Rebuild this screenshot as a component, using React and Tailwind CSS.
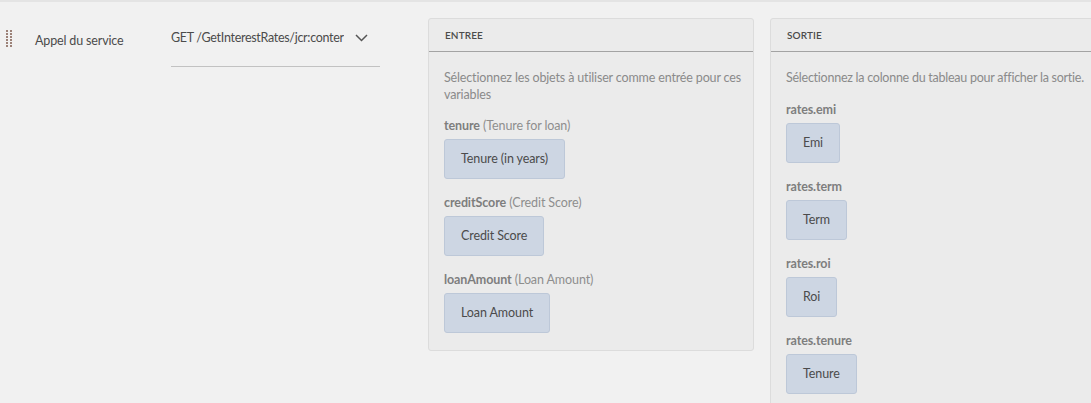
import React from "react";

const font = { fontFamily: "Lato, 'Open Sans', sans-serif" };

function Handle() {
  const rows = [0, 1, 2, 3, 4, 5];
  return (
    <div className="flex gap-[2px] mt-[12px]">
      {[0, 1].map((c) => (
        <div key={c} className="flex flex-col gap-[1px]">
          {rows.map((r) => (
            <div key={r} className="w-[2px] h-[2px] bg-[#9c8278]" />
          ))}
        </div>
      ))}
    </div>
  );
}

function Btn({ children }) {
  return (
    <div className="inline-flex items-center h-[40px] px-[16px] rounded-[3px] bg-[#cdd6e3] border border-[#bdc8d8] text-[12.5px] tracking-[-0.1px] text-[#4b4b4b]">
      {children}
    </div>
  );
}

function Panel({ title, desc, descClass, children, width }) {
  return (
    <div className={`shrink-0 ${width} rounded-[3px] border border-[#dcdcdc] bg-[#ebebeb]`}>
      <div className="h-[33px] flex items-center px-[16px] border-b border-[#a3a3a3] text-[10px] font-semibold text-[#4b4b4b] tracking-[0.1px]">
        {title}
      </div>
      <div className="px-[15px] pt-[17px] pb-[17px]">
        <div className={`text-[12.5px] leading-[17px] tracking-[-0.15px] text-[#8a8a8a] ${descClass}`}>{desc}</div>
        {children}
      </div>
    </div>
  );
}

function Field({ name, label, btn }) {
  return (
    <div className="mt-[15px]">
      <div className="text-[12.5px] leading-[17px] tracking-[-0.1px] text-[#8e8e8e]">
        <span className="font-bold text-[#7e7e7e]">{name}</span>
        {label ? <span> ({label})</span> : null}
      </div>
      <div className="mt-[5px]">
        <Btn>{btn}</Btn>
      </div>
    </div>
  );
}

export default function App() {
  return (
    <div className="w-[1091px] h-[403px] overflow-hidden bg-[#f1f1f1] border-t-2 border-[#e4e4e4]" style={font}>
      <div className="flex items-start pt-[16px]">
        <div className="shrink-0 pl-[6px]">
          <Handle />
        </div>
        <div className="shrink-0 ml-[23px] mt-[14px] w-[136px] text-[12.5px] tracking-[-0.15px] text-[#4b4b4b]">Appel du service</div>
        <div className="shrink-0 mt-[11px] w-[209px] border-b border-[#c2c2c2] h-[38px] flex items-start justify-between pr-[12px]">
          <span className="text-[12.5px] tracking-[-0.3px] text-[#4b4b4b] leading-[17px] whitespace-nowrap overflow-hidden w-[173px]">GET /GetInterestRates/jcr:conter</span>
          <svg width="13" height="8" viewBox="0 0 13 8" className="mt-[5px]">
            <path d="M1 1 L6.5 6.5 L12 1" fill="none" stroke="#555" strokeWidth="1.5" />
          </svg>
        </div>
        <div className="shrink-0 ml-[48px] flex items-start gap-[16px]">
          <Panel
            title="ENTREE"
            width="w-[326px]"
            descClass="mr-[-12px]"
            desc="Sélectionnez les objets à utiliser comme entrée pour ces variables"
          >
            <div className="mt-[-1px]">
              <Field name="tenure" label="Tenure for loan" btn="Tenure (in years)" />
              <Field name="creditScore" label="Credit Score" btn="Credit Score" />
              <Field name="loanAmount" label="Loan Amount" btn="Loan Amount" />
            </div>
          </Panel>
          <Panel
            title="SORTIE"
            width="w-[330px]"
            descClass="whitespace-nowrap tracking-[-0.25px]"
            desc="Sélectionnez la colonne du tableau pour afficher la sortie."
          >
            <div className="mt-[1px]">
              <Field name="rates.emi" btn="Emi" />
              <Field name="rates.term" btn="Term" />
              <Field name="rates.roi" btn="Roi" />
              <Field name="rates.tenure" btn="Tenure" />
            </div>
          </Panel>
        </div>
      </div>
    </div>
  );
}
